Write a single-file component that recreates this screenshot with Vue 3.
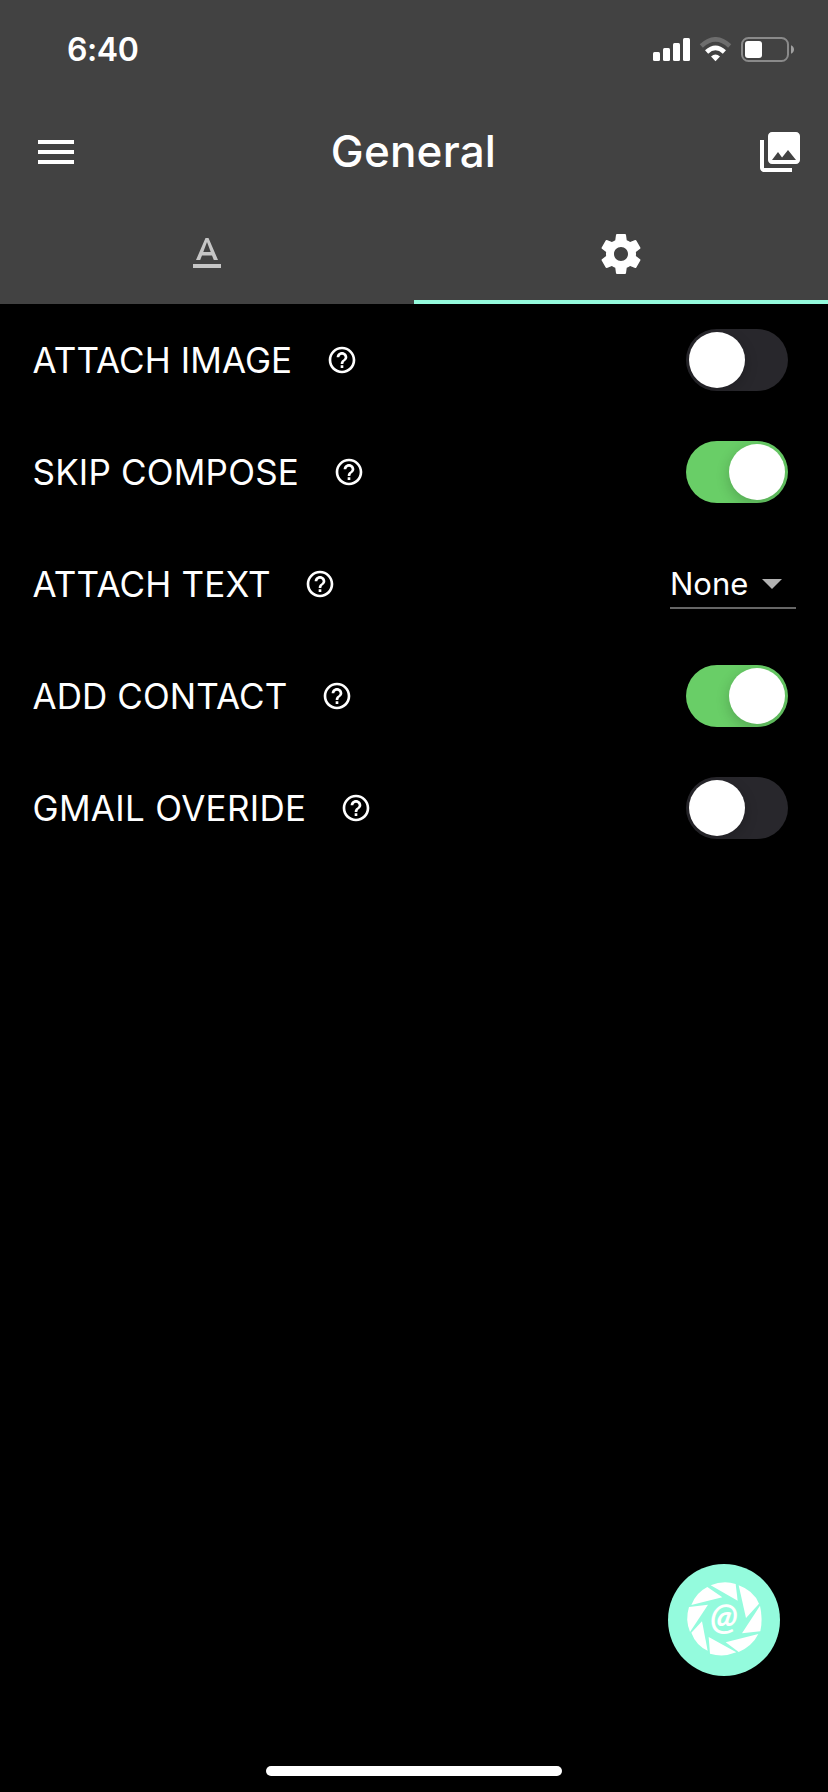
<template>
  <div class="screen">
    <header class="app-header">
      <!-- status bar -->
      <div class="status-bar">
        <span class="clock">6:40</span>
        <svg class="status-icons" viewBox="0 0 141 25">
          <g fill="#fff">
            <rect x="0" y="15" width="7" height="9" rx="1.5" />
            <rect x="10" y="11" width="7" height="13" rx="1.5" />
            <rect x="20" y="6" width="7" height="18" rx="1.5" />
            <rect x="30" y="1" width="7" height="23" rx="1.5" />
            <path d="M62.5 24.2 58 19.6Q62.5 15.2 67 19.6Z" />
          </g>
          <path d="M53.600 15Q62.5 6.600 71.400 15" fill="none" stroke="#fff" stroke-width="4.6" />
          <path d="M48.300 9Q62.5 -4.200 76.700 9" fill="none" stroke="#6d6d6d" stroke-width="4.6" />
          <rect x="89" y="1" width="46" height="23" rx="6.5" fill="none" stroke="#8a8a8a" stroke-width="2" />
          <rect x="92" y="4" width="17" height="17" rx="3" fill="#fff" />
          <path d="M138 8.2Q141 9.6 141 12.5T138 16.8Z" fill="#a0a0a0" />
        </svg>
      </div>

      <!-- toolbar -->
      <div class="toolbar">
        <button class="icon-btn">
          <svg viewBox="0 0 24 24"><path d="M3 18h18v-2H3v2zm0-5h18v-2H3v2zm0-7v2h18V6H3z" /></svg>
        </button>
        <h1 class="title">General</h1>
        <button class="icon-btn">
          <svg viewBox="0 0 24 24">
            <path d="M22 16V4c0-1.100-.9-2-2-2H8c-1.100 0-2 .9-2 2v12c0 1.100.9 2 2 2h12c1.100 0 2-.9 2-2zm-11-4l2.030 2.710L16 11l4 5H8l3-4zM2 6v14c0 1.100.9 2 2 2h14v-2H4V6H2z" />
          </svg>
        </button>
      </div>

      <!-- tabs -->
      <nav class="tabs">
        <button
          v-for="tab in tabs"
          :key="tab.name"
          class="tab"
          :class="{ active: activeTab === tab.name }"
          @click="activeTab = tab.name"
        >
          <svg viewBox="0 0 24 24"><path :d="tab.icon" /></svg>
        </button>
      </nav>
    </header>

    <main class="settings">
      <div v-for="item in settings" :key="item.label" class="row">
        <span class="label" :style="{ letterSpacing: item.tracking + 'px' }">{{ item.label }}</span>
        <svg class="help" viewBox="0 0 24 24">
          <path d="M11 18h2v-2h-2v2zm1-16C6.480 2 2 6.480 2 12s4.480 10 10 10 10-4.480 10-10S17.520 2 12 2zm0 18c-4.410 0-8-3.590-8-8s3.590-8 8-8 8 3.590 8 8-3.590 8-8 8zm0-14c-2.210 0-4 1.790-4 4h2c0-1.100.9-2 2-2s2 .9 2 2c0 2-3 1.750-3 5h2c0-2.250 3-2.500 3-5 0-2.210-1.790-4-4-4z" />
        </svg>
        <div v-if="item.type === 'select'" class="select">
          <span class="select-value">{{ item.value }}</span>
          <svg class="arrow" viewBox="0 0 20 10"><path d="M0 0h20L10 10z" /></svg>
        </div>
        <button
          v-else
          class="toggle"
          :class="{ on: item.value }"
          @click="item.value = !item.value"
        >
          <span class="thumb"></span>
        </button>
      </div>
    </main>

    <!-- camera button -->
    <button class="fab">
      <svg viewBox="24 28 336 336">
        <g fill="#fff">
          <path d="M152 92Q190 76 227 88L233 138Z" />
          <path d="M236 92Q281 108 297 147L258 190Z" />
          <path d="M300 153Q309 194 301 230L246 236Z" />
          <path d="M295 238Q277 274 236 292L197 263Z" />
          <path d="M146 247L229 293Q190 309 150 297Z" />
          <path d="M126 200L143 288Q108 272 94 234Z" />
          <path d="M90 232L144 150L87 157Q75 195 90 232Z" />
          <path d="M94 151L187 128L142 97Q108 114 94 151Z" />
        </g>
        <text x="192" y="225" text-anchor="middle">@</text>
      </svg>
    </button>

    <div class="home-indicator"></div>
  </div>
</template>

<script setup>
import { ref } from 'vue'

const activeTab = ref('settings')

const tabs = [
  {
    name: 'text',
    icon: 'M5 17v2h14v-2H5zm4.500-4.200h5l.9 2.200h2.100L12.750 4h-1.500L6.500 15h2.100l.9-2.200zM12 5.980L13.870 11h-3.740L12 5.980z'
  },
  {
    name: 'settings',
    icon: 'M19.430 12.980c.04-.32.07-.64.07-.98s-.03-.66-.07-.98l2.110-1.650c.19-.15.24-.42.12-.64l-2-3.460c-.12-.22-.39-.3-.61-.22l-2.490 1c-.52-.4-1.080-.73-1.690-.98l-.38-2.650C14.460 2.180 14.250 2 14 2h-4c-.25 0-.46.18-.49.42l-.38 2.650c-.61.25-1.170.59-1.690.98l-2.490-1c-.23-.09-.49 0-.61.22l-2 3.460c-.13.22-.07.49.12.64l2.110 1.650c-.04.32-.07.65-.07.98s.03.66.07.98l-2.110 1.650c-.19.15-.24.42-.12.64l2 3.460c.12.22.39.3.61.22l2.490-1c.52.4 1.080.73 1.690.98l.38 2.650c.03.24.24.42.49.42h4c.25 0 .46-.18.49-.42l.38-2.650c.61-.25 1.170-.59 1.690-.98l2.490 1c.23.09.49 0 .61-.22l2-3.460c.12-.22.07-.49-.12-.64l-2.110-1.650zM12 15.500c-1.930 0-3.500-1.570-3.500-3.500s1.570-3.500 3.500-3.500 3.500 1.570 3.500 3.500-1.570 3.500-3.500 3.500z'
  }
]

// tracking: letter spacing of the label in px
const settings = ref([
  { label: 'ATTACH IMAGE', type: 'toggle', value: false, tracking: 0.07 },
  { label: 'SKIP COMPOSE', type: 'toggle', value: true, tracking: 0.2 },
  { label: 'ATTACH TEXT', type: 'select', value: 'None', tracking: 0.17 },
  { label: 'ADD CONTACT', type: 'toggle', value: true, tracking: 0.08 },
  { label: 'GMAIL OVERIDE', type: 'toggle', value: false, tracking: 0.31 }
])
</script>

<style>
body {
  margin: 0;
  background: #000;
}
</style>

<style scoped>
.screen {
  position: relative;
  width: 828px;
  height: 1792px;
  background: #000;
  color: #fff;
  font-family: Inter, 'Liberation Sans', sans-serif;
  overflow: hidden;
}
button {
  border: none;
  padding: 0;
  background: none;
  cursor: pointer;
}
svg {
  display: block;
}

/* header */
.app-header {
  height: 304px;
  background: #424242;
}
.status-bar {
  height: 99px;
  box-sizing: border-box;
  padding: 0 34px 0 67px;
  display: flex;
  align-items: center;
  justify-content: space-between;
}
.clock {
  font-size: 32px;
  font-weight: 600;
  line-height: 40px;
  padding-top: 1px;
  letter-spacing: -0.4px;
}
.status-icons {
  width: 141px;
  height: 25px;
}
.toolbar {
  height: 105px;
  box-sizing: border-box;
  padding: 0 24px 0 32px;
  display: flex;
  align-items: center;
  justify-content: space-between;
}
.icon-btn svg,
.tab svg {
  width: 48px;
  height: 48px;
  fill: #fff;
}
.title {
  margin: 0;
  padding: 0 9px 2px 0;
  font-size: 44px;
  font-weight: 500;
  line-height: 56px;
  letter-spacing: 0.2px;
}
.tabs {
  display: flex;
  height: 100px;
}
.tab {
  flex: 1;
  display: flex;
  align-items: center;
  justify-content: center;
  opacity: 0.7;
}
.tab.active {
  opacity: 1;
  box-shadow: inset 0 -4px #94fbdd;
}

/* settings list */
.row {
  height: 112px;
  box-sizing: border-box;
  padding: 0 40px 0 32px;
  display: flex;
  align-items: center;
}
.label {
  font-size: 35px;
  line-height: 42px;
  padding-left: 0.5px;
  white-space: nowrap;
}
.help {
  width: 32px;
  height: 32px;
  margin-left: 33.5px;
  margin-right: auto;
  fill: #fff;
}
.toggle {
  width: 102px;
  height: 62px;
  padding: 3px;
  border-radius: 31px;
  background: #28272c;
  display: flex;
  overflow: hidden;
}
.toggle.on {
  background: #69ce67;
  justify-content: flex-end;
}
.thumb {
  width: 56px;
  height: 56px;
  border-radius: 50%;
  background: #fff;
  box-shadow: 0 4px 14px rgba(0, 0, 0, 0.2);
}
.select {
  width: 126px;
  height: 50px;
  box-sizing: border-box;
  margin-right: -8px;
  border-bottom: 2px solid #666;
  display: flex;
  align-items: center;
  justify-content: space-between;
  padding: 2px 14px 0 0;
}
.select-value {
  font-size: 31px;
  line-height: 38px;
}
.arrow {
  width: 20px;
  height: 10px;
  fill: #b2b2b2;
}

/* floating button */
.fab {
  position: absolute;
  right: 48px;
  bottom: 116px;
  width: 112px;
  height: 112px;
  border-radius: 50%;
  background: #94fbdd;
}
.fab svg {
  width: 112px;
  height: 112px;
}
.fab text {
  font: italic bold 108px Lato, sans-serif;
  fill: #fff;
}
.home-indicator {
  position: absolute;
  left: 266px;
  bottom: 16px;
  width: 296px;
  height: 10px;
  border-radius: 5px;
  background: #fff;
}
</style>
